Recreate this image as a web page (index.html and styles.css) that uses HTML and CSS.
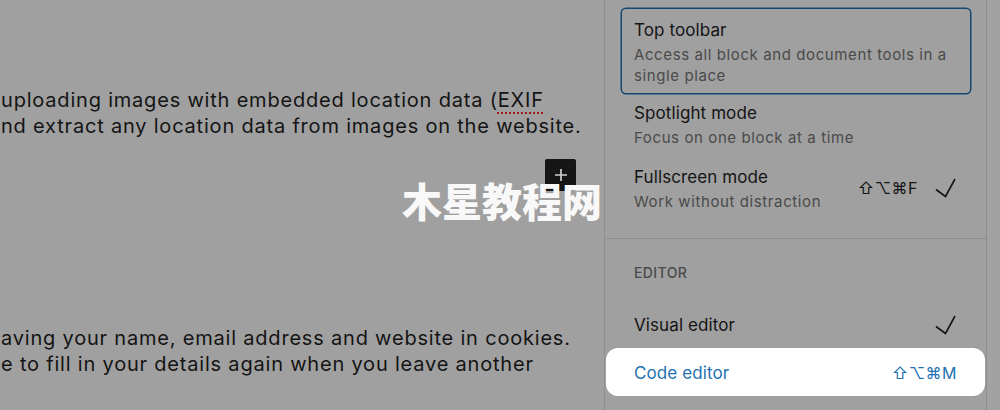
FILE: index.html
```html
<!DOCTYPE html>
<html>
<head>
    <title>Editor options</title>
    <link rel="stylesheet" href="styles.css">
</head>
<body>

    <div class="layout">
        <main class="editor">
            <div class="para para-first">
                <div class="line">uploading images with embedded location data (<span class="misspelled">EXIF</span></div>
                <div class="line">nd extract any location data from images on the website.</div>
            </div>

            <button class="inserter" aria-label="Add block">
                <svg width="14" height="14" viewBox="0 0 14 14"><path d="M7 1v12M1 7h12" stroke="#cfcfcf" stroke-width="1.7" fill="none"/></svg>
            </button>

            <div class="para para-second">
                <div class="line">aving your name, email address and website in cookies.</div>
                <div class="line">e to fill in your details again when you leave another</div>
            </div>
        </main>

        <aside class="panel">
            <div class="group">
                <div class="item item-focus">
                    <div class="item-text">
                        <div class="item-title">Top toolbar</div>
                        <div class="item-desc">Access all block and document tools in a single place</div>
                    </div>
                </div>
                <div class="item">
                    <div class="item-text">
                        <div class="item-title">Spotlight mode</div>
                        <div class="item-desc">Focus on one block at a time</div>
                    </div>
                </div>
                <div class="item">
                    <div class="item-text">
                        <div class="item-title">Fullscreen mode</div>
                        <div class="item-desc">Work without distraction</div>
                    </div>
                    <span class="shortcut">⇧⌥⌘F</span>
                    <svg class="check" width="24" height="24" viewBox="0 0 24 24"><path d="M2 13.5l9.5 7L21 3" stroke="#141414" stroke-width="1.6" fill="none"/></svg>
                </div>
            </div>

            <div class="group group-editor">
                <div class="group-label">Editor</div>
                <div class="item item-single">
                    <div class="item-text">
                        <div class="item-title">Visual editor</div>
                    </div>
                    <svg class="check" width="24" height="24" viewBox="0 0 24 24"><path d="M2 13.5l9.5 7L21 3" stroke="#141414" stroke-width="1.6" fill="none"/></svg>
                </div>
                <div class="item item-highlight">
                    <div class="item-text">
                        <div class="item-title">Code editor</div>
                    </div>
                    <span class="shortcut">⇧⌥⌘M</span>
                </div>
            </div>
        </aside>

        <div class="strip"></div>
    </div>

    <div class="watermark">木星教程网</div>

</body>
</html>
```

FILE: styles.css
```css
body, html {
    height: 100%;
    margin: 0;
    font-family: Inter, "Noto Sans", sans-serif;
    background: #a0a0a0;
    overflow: hidden;
}

.layout {
    display: flex;
    height: 410px;
}

.editor {
    position: relative;
    flex: 1;
    overflow: hidden;
    color: #141414;
    font-size: 20px;
    line-height: 26px;
    letter-spacing: 0.8px;
}

.para {
    padding-left: 1px;
}

.para-first {
    margin-top: 87px;
}

.para-second {
    margin-top: 186px;
}

.line {
    white-space: nowrap;
}

.misspelled {
    text-decoration: underline dotted #a01818;
    text-decoration-thickness: 2px;
    text-underline-offset: 5px;
}

.inserter {
    position: absolute;
    left: 545px;
    top: 159px;
    width: 31px;
    height: 32px;
    padding: 0;
    border: none;
    border-radius: 2px;
    background: #161616;
    display: flex;
    align-items: center;
    justify-content: center;
}

.panel {
    width: 381px;
    border-left: 1px solid #8e8e8e;
    border-right: 1px solid #8e8e8e;
    color: #141414;
}

.strip {
    width: 13px;
    background: #a2a2a2;
}

.group {
    padding: 9px 16px 18px 17px;
}

.group-editor {
    border-top: 1px solid #8e8e8e;
    padding-top: 26px;
    padding-bottom: 0;
}

.group-label {
    padding-left: 12px;
    font-size: 14px;
    line-height: 16px;
    font-weight: 500;
    letter-spacing: 0.4px;
    text-transform: uppercase;
    color: #4a4a4a;
    margin-bottom: 24px;
}

.item {
    display: flex;
    align-items: center;
    padding: 8px 12px;
    border-radius: 4px;
}

.item-focus {
    padding-top: 9px;
    padding-bottom: 7px;
    box-shadow: 0 0 0 1.5px #154770;
}

.item-text {
    flex: 1;
}

.item-title {
    font-size: 17px;
    line-height: 24px;
    letter-spacing: 0.1px;
}

.item-desc {
    margin-top: 3px;
    font-size: 15px;
    line-height: 20.5px;
    color: #4a4a4a;
    letter-spacing: 0.6px;
}

.shortcut {
    font-family: Inter, "DejaVu Sans", sans-serif;
    font-size: 16px;
    letter-spacing: 0.5px;
}

.check {
    margin-left: 16px;
}

.item-single .check {
    margin-left: 0;
}

.item-highlight {
    margin: 3px -15px 0 -16px;
    padding: 13px 28px 11px;
    border-radius: 12px;
    background: #ffffff;
    color: #2271b1;
}

.watermark {
    position: absolute;
    left: 402px;
    top: 180px;
    font-family: "Noto Sans CJK SC", sans-serif;
    font-weight: 900;
    font-size: 40px;
    line-height: 40px;
    color: #f8f8f8;
}
```
